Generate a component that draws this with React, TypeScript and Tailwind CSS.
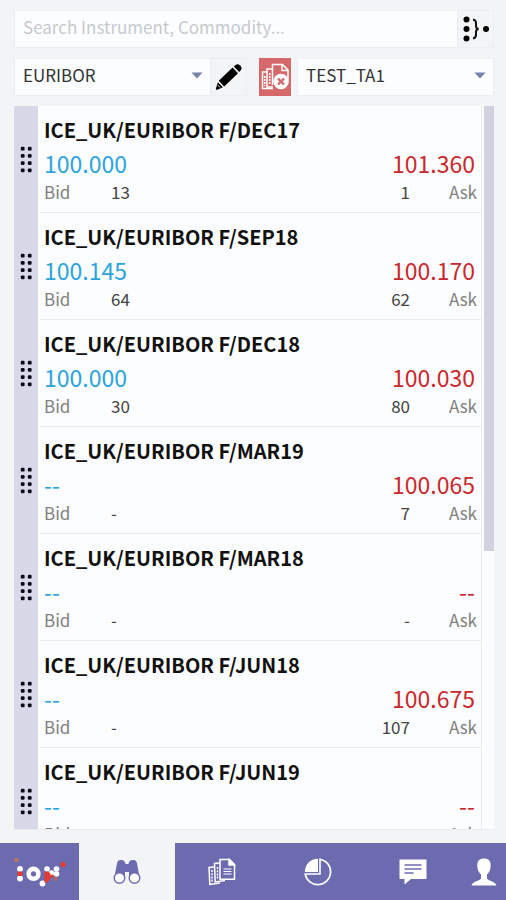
type Quote = {
  name: string;
  bid: string;
  bidSize: string;
  ask: string;
  askSize: string;
};

const quotes: Quote[] = [
  { name: "ICE_UK/EURIBOR F/DEC17", bid: "100.000", bidSize: "13", ask: "101.360", askSize: "1" },
  { name: "ICE_UK/EURIBOR F/SEP18", bid: "100.145", bidSize: "64", ask: "100.170", askSize: "62" },
  { name: "ICE_UK/EURIBOR F/DEC18", bid: "100.000", bidSize: "30", ask: "100.030", askSize: "80" },
  { name: "ICE_UK/EURIBOR F/MAR19", bid: "--", bidSize: "-", ask: "100.065", askSize: "7" },
  { name: "ICE_UK/EURIBOR F/MAR18", bid: "--", bidSize: "-", ask: "--", askSize: "-" },
  { name: "ICE_UK/EURIBOR F/JUN18", bid: "--", bidSize: "-", ask: "100.675", askSize: "107" },
  { name: "ICE_UK/EURIBOR F/JUN19", bid: "--", bidSize: "-", ask: "--", askSize: "-" },
];

function GroupIcon() {
  return (
    <svg width="28" height="28" viewBox="0 0 28 28">
      <g fill="#000">
        <circle cx="4.5" cy="4.5" r="3" />
        <circle cx="4.5" cy="14" r="3" />
        <circle cx="4.5" cy="23.5" r="3" />
        <circle cx="24" cy="14" r="3" />
      </g>
      <path
        d="M11 4.500c2.600.4 3 1.700 3 3.700v2.600c0 2 .6 3.200 2.700 3.200-2.100 0-2.700 1.200-2.700 3.200v2.600c0 2-.4 3.300-3 3.700"
        fill="none"
        stroke="#111"
        strokeWidth="2"
      />
    </svg>
  );
}

function PencilIcon() {
  return (
    <svg width="28" height="28" viewBox="0 0 28 28" fill="#000">
      <path d="M18.800 3.400 21.200 1.600Q23 .6 24.800 2.200L26 3.500Q27.300 5.200 26 7L24.200 9Z" />
      <path d="M17.600 4.600 23 10.200 9.200 23.400 3.800 17.800Z" />
      <path d="M2.900 19.200 7.900 24.300 2.400 26.800Q.6 27.200 1 25.300Z" />
      <path d="M2.800 22.200 5 24.400" stroke="#f3f4f6" strokeWidth="1" />
    </svg>
  );
}

function CancelOrdersIcon() {
  return (
    <svg width="28" height="28" viewBox="0 0 28 28" fill="none" stroke="#fff" strokeWidth="1.5">
      <path d="M6 9H1.500v16.500H12" />
      <path d="M11.500 6H6V24h6" />
      <path d="M3.800 13v10M8.700 10v12" strokeDasharray="2 1" />
      <path d="M11.500 22V1.500h10l5.500 5.500v9M21 1.500v6h6" />
      <circle cx="20" cy="18.5" r="7.8" fill="#fff" stroke="none" />
      <path d="m17 15.500 6 6m0-6-6 6" stroke="#d4686b" strokeWidth="2.4" />
    </svg>
  );
}

function DragDots() {
  return (
    <svg width="12" height="27" viewBox="0 0 12 27" fill="#0b0b14">
      {[2, 9].map((x) =>
        [2.5, 9.7, 16.9, 24.1].map((y) => (
          <rect key={`${x}-${y}`} x={x - 1.2} y={y - 1.7} width="3.8" height="3.8" rx="1.2" />
        ))
      )}
    </svg>
  );
}

function LogoIcon() {
  return (
    <svg width="54" height="34" viewBox="0 0 54 34">
      <rect x="1.5" y="3" width="4" height="4" rx="1" fill="#b5785f" />
      <g fill="#fff">
        <circle cx="7" cy="14" r="2.9" />
        <circle cx="7" cy="23.5" r="2.9" />
        <circle cx="29.500" cy="28.5" r="2.9" />
        <circle cx="34" cy="14" r="2.8" />
        <circle cx="38.500" cy="18" r="2.8" />
        <circle cx="43.500" cy="14" r="2.8" />
        <circle cx="43.500" cy="19" r="2.8" />
      </g>
      <rect x="4.5" y="16.5" width="5" height="4.500" rx="1" fill="#e23b2e" />
      <circle cx="20.500" cy="18.8" r="4.9" fill="none" stroke="#fff" strokeWidth="4.6" />
      <path d="M31.500 16.500h3.500l2.500 2v5.500l-3.500 3.500h-2.500z" fill="#e23b2e" />
      <circle cx="39" cy="21" r="1.6" fill="#e23b2e" />
      <circle cx="42.500" cy="23.7" r="2.200" fill="#a86a66" />
      <circle cx="50" cy="9.500" r="2.600" fill="#e23b2e" />
    </svg>
  );
}

function BinocularsIcon() {
  return (
    <svg width="28" height="26" viewBox="0 0 28 26" fill="#6d6bb0">
      <path d="M4 4.500C4.300 1.500 6.500.5 9 1c2.300.4 3.300 2 3.500 4h3c.2-2 1.200-3.600 3.500-4 2.500-.5 4.700.5 5 3.500L26.500 18H16v-5h-4v5H1.500Z" />
      <circle cx="6.500" cy="19" r="5.300" fill="#fff" stroke="#6d6bb0" strokeWidth="1.400" />
      <circle cx="21.500" cy="19" r="5.300" fill="#fff" stroke="#6d6bb0" strokeWidth="1.400" />
    </svg>
  );
}

function OrdersIcon() {
  return (
    <svg width="28" height="28" viewBox="0 0 28 28" fill="none" stroke="#fff" strokeWidth="1.500">
      <path d="M6.500 9 1 9.500 1.800 26.500 12 25" />
      <path d="M12 5 6.500 5.500 7.200 24 17 22.500" />
      <path d="M4 12v12M9.500 9v12" strokeDasharray="2 1.200" />
      <path d="M12 1.500h9.500l5 5v14.800H12Z" />
      <path d="M21 1.500v5.500h5.500Z" fill="#fff" />
      <path d="M15.500 11h8M15.500 13.500h8M15.500 16h8" strokeWidth="1.200" />
    </svg>
  );
}

function PieIcon() {
  return (
    <svg width="28" height="28" viewBox="0 0 28 28" fill="none" stroke="#fff" strokeWidth="1.600">
      <path d="M16 1.200A12.800 12.800 0 1 1 1.200 16H16Z" />
      <path d="M14 .8v13.200H.8C.8 6.500 6.500.8 14 .8Z" fill="#fff" stroke="none" />
    </svg>
  );
}

function ChatIcon() {
  return (
    <svg width="28" height="26" viewBox="0 0 28 26">
      <path d="M.5.500h27v19.500H12L5.500 25.500V20h-5Z" fill="#fff" />
      <path d="M5.500 6h17M5.500 10h17M5.500 14h9" stroke="#6d6bb0" strokeWidth="1.600" />
    </svg>
  );
}

function UserIcon() {
  return (
    <svg width="26" height="28" viewBox="0 0 26 28" fill="#fff">
      <path d="M13 .5c4.500 0 6.700 2.600 6.700 6.500 0 4.500-1 7-3.700 9.500v4c1 2.200 8 2.600 9.500 7H.5C2 23.100 9 22.700 10 20.500v-4C7.300 14 6.300 11.500 6.300 7 6.300 3.100 8.500.5 13 .5Z" />
    </svg>
  );
}

function Dropdown({ label, value, className }: { label: string; value: string; className: string }) {
  return (
    <div className={`relative ${className}`}>
      <select
        aria-label={label}
        defaultValue={value}
        className="h-full w-full appearance-none border border-[#eceef2] bg-[#fcfdfe] pb-1 pl-2 pr-8 text-[17px] text-[#333]"
      >
        <option>{value}</option>
      </select>
      <svg
        className="pointer-events-none absolute right-2 top-3.5"
        width="12"
        height="7"
        viewBox="0 0 12 7"
        fill="#7683ad"
      >
        <path d="M.5.500h11L6 6.500Z" />
      </svg>
    </div>
  );
}

function QuoteRow({ quote }: { quote: Quote }) {
  return (
    <li className="flex">
      <button aria-label={`Move ${quote.name}`} className="flex w-6 shrink-0 items-center justify-center bg-[#d8d8e9]">
        <DragDots />
      </button>
      <div className="ml-0.5 flex-1 border-b border-r border-[#e9ebef] pb-2 pl-1 pr-1 pt-2">
        <h2 className="text-xl font-bold leading-8 text-[#111]">{quote.name}</h2>
        <div className="flex justify-between pr-0.5 text-[23px] leading-[34px]">
          <span className="text-[#2ba3dc]">{quote.bid}</span>
          <span className="text-[#c9282d]">{quote.ask}</span>
        </div>
        <div className="flex justify-between text-[17px] leading-6 text-[#444]">
          <div className="flex">
            <span className="w-[67px] text-[#808080]">Bid</span>
            <span>{quote.bidSize}</span>
          </div>
          <div className="flex text-right">
            <span>{quote.askSize}</span>
            <span className="w-[67px] text-[#808080]">Ask</span>
          </div>
        </div>
      </div>
    </li>
  );
}

const tabs = [
  { label: "Orders", Icon: OrdersIcon },
  { label: "Positions", Icon: PieIcon },
  { label: "Messages", Icon: ChatIcon },
];

export default function App() {
  return (
    <div className="flex h-screen flex-col bg-[#f3f4f6] font-['Noto_Sans_CJK_SC',sans-serif]">
      {/* Search and filters */}
      <header className="flex flex-col gap-2.5 pb-2.5 pl-3.5 pr-3 pt-2.5">
        <div className="flex h-[38px]">
          <input
            type="search"
            aria-label="Search instrument"
            placeholder="Search Instrument, Commodity..."
            className="min-w-0 flex-1 border border-[#eceef2] bg-[#fcfdfe] px-2 pb-1 text-[17px] placeholder:text-[#c6c9d0]"
          />
          <button aria-label="Group" className="flex w-9 items-center justify-center border border-l-0 border-[#eceef2]">
            <GroupIcon />
          </button>
        </div>
        <div className="flex h-[38px]">
          <Dropdown label="Watchlist" value="EURIBOR" className="flex-1" />
          <button aria-label="Edit watchlist" className="flex w-9 items-center justify-center border border-l-0 border-[#eceef2]">
            <PencilIcon />
          </button>
          <button aria-label="Cancel all orders" className="ml-3 mr-1.5 flex w-8 items-center justify-center bg-[#d4686b]">
            <CancelOrdersIcon />
          </button>
          <Dropdown label="Account" value="TEST_TA1" className="flex-1" />
        </div>
      </header>

      {/* Quotes */}
      <main className="mb-[13px] ml-3.5 mr-3 flex min-h-0 flex-1 border-b border-[#e9ebef] bg-[#fcfdfe]">
        <ul className="flex-1 overflow-y-auto [scrollbar-width:none]">
          {quotes.map((quote) => (
            <QuoteRow key={quote.name} quote={quote} />
          ))}
        </ul>
        <div className="ml-0.5 w-2.5">
          <div className="h-[61.5%] bg-[#d0d3df]" />
        </div>
      </main>

      {/* Bottom navigation */}
      <nav className="flex h-[57px] shrink-0 bg-[#6d6bb0]">
        <a href="#home" aria-label="Home" className="flex w-[79px] items-center justify-center">
          <LogoIcon />
        </a>
        <a href="#watchlist" aria-label="Watchlist" className="flex flex-1 items-center justify-center bg-[#f3f4f6]">
          <BinocularsIcon />
        </a>
        {tabs.map(({ label, Icon }) => (
          <a key={label} href={`#${label.toLowerCase()}`} aria-label={label} className="flex flex-1 items-center justify-center">
            <Icon />
          </a>
        ))}
        <a href="#profile" aria-label="Profile" className="flex w-[45px] items-center justify-center">
          <UserIcon />
        </a>
      </nav>
    </div>
  );
}
